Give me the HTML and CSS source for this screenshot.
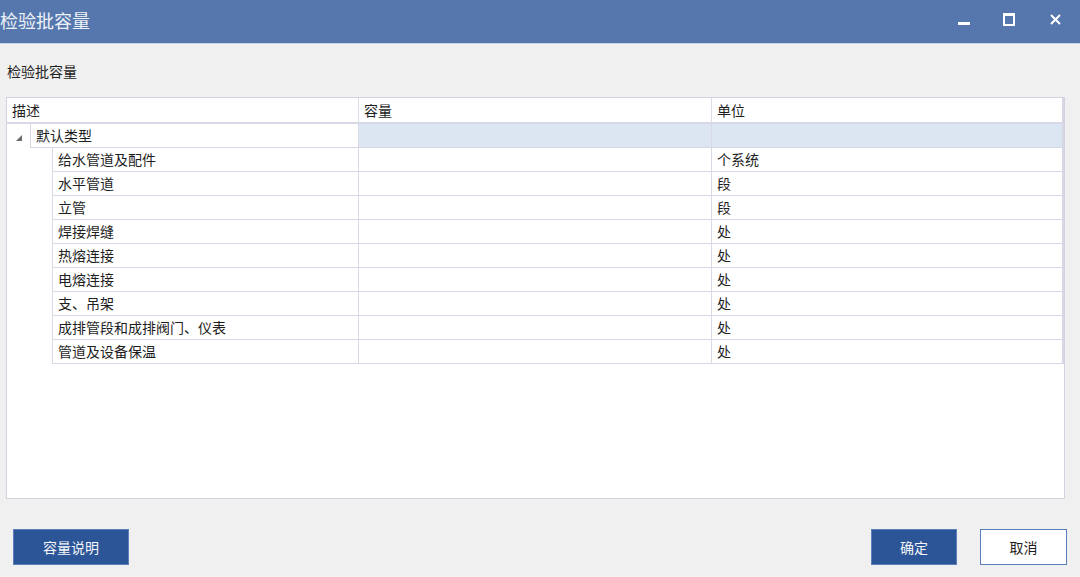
FILE: index.html
```html
<!DOCTYPE html>
<html lang="zh-CN">
<head>
<meta charset="utf-8">
<title>检验批容量</title>
<link rel="stylesheet" href="styles.css">
</head>
<body>
<div class="window">
  <div class="titlebar">
    <div class="title">检验批容量</div>
    <div class="controls">
      <span class="ctl"><svg width="12" height="12" viewBox="0 0 12 12"><rect x="0" y="7" width="12" height="3" fill="#fff"/></svg></span>
      <span class="ctl"><svg width="12" height="13" viewBox="0 0 12 13"><path d="M1 1.5H11V12H1Z" fill="none" stroke="#fff" stroke-width="2"/><rect x="0" y="0" width="12" height="3" fill="#fff"/></svg></span>
      <span class="ctl"><svg width="11" height="11" viewBox="0 0 11 11"><path d="M1 1L10 10M10 1L1 10" stroke="#fff" stroke-width="2"/></svg></span>
    </div>
  </div>
  <div class="content">
    <div class="label">检验批容量</div>
    <div class="grid">
      <div class="row head">
        <div class="cell c1">描述</div>
        <div class="cell c2">容量</div>
        <div class="cell c3">单位</div>
      </div>
      <div class="row group">
        <div class="indent exp"><svg width="7" height="7" viewBox="0 0 7 7"><polygon points="6,0 6,6 0,6" fill="#6b6b6b"/></svg></div>
        <div class="cell c1">默认类型</div>
        <div class="cell c2 sel"></div>
        <div class="cell c3 sel"></div>
      </div>
      <div class="row child"><div class="indent wide"></div><div class="cell c1">给水管道及配件</div><div class="cell c2"></div><div class="cell c3">个系统</div></div>
      <div class="row child"><div class="indent wide"></div><div class="cell c1">水平管道</div><div class="cell c2"></div><div class="cell c3">段</div></div>
      <div class="row child"><div class="indent wide"></div><div class="cell c1">立管</div><div class="cell c2"></div><div class="cell c3">段</div></div>
      <div class="row child"><div class="indent wide"></div><div class="cell c1">焊接焊缝</div><div class="cell c2"></div><div class="cell c3">处</div></div>
      <div class="row child"><div class="indent wide"></div><div class="cell c1">热熔连接</div><div class="cell c2"></div><div class="cell c3">处</div></div>
      <div class="row child"><div class="indent wide"></div><div class="cell c1">电熔连接</div><div class="cell c2"></div><div class="cell c3">处</div></div>
      <div class="row child"><div class="indent wide"></div><div class="cell c1">支、吊架</div><div class="cell c2"></div><div class="cell c3">处</div></div>
      <div class="row child"><div class="indent wide"></div><div class="cell c1">成排管段和成排阀门、仪表</div><div class="cell c2"></div><div class="cell c3">处</div></div>
      <div class="row child"><div class="indent wide"></div><div class="cell c1">管道及设备保温</div><div class="cell c2"></div><div class="cell c3">处</div></div>
    </div>
    <div class="footer">
      <button class="btn primary wide-btn">容量说明</button>
      <div class="right">
        <button class="btn primary ok">确定</button>
        <button class="btn secondary cancel">取消</button>
      </div>
    </div>
  </div>
</div>
</body>
</html>
```

FILE: styles.css
```css
html, body {
  margin: 0;
  padding: 0;
  background: #f0f0f0;
  font-family: "Noto Sans CJK SC", "Microsoft YaHei", sans-serif;
  font-size: 14px;
  color: #1e1e1e;
}
.window {
  width: 1080px;
  height: 577px;
  overflow: hidden;
  display: flex;
  flex-direction: column;
}
.titlebar {
  height: 43px;
  background: #5577ad;
  border-bottom: 1px solid #c9d3e4;
  display: flex;
  align-items: center;
  justify-content: space-between;
  flex-shrink: 0;
}
.title {
  color: #eef2f8;
  font-size: 18px;
  line-height: 24px;
  padding-left: 0;
  margin-top: -4px;
}
.controls {
  display: flex;
  align-items: center;
  padding-right: 2px;
  gap: 0;
}
.ctl {
  display: flex;
  align-items: center;
  justify-content: center;
  width: 46px;
  height: 30px;
}
.ctl:nth-child(1) { width: 45px; margin-top: -2px; }
.ctl:nth-child(2) { width: 46px; margin-top: -5px; }
.ctl:nth-child(3) { width: 46px; margin-top: -5px; }
.content {
  flex: 1;
  display: flex;
  flex-direction: column;
  padding: 0 13px 0 6px;
}
.label {
  height: 53px;
  line-height: 20px;
  padding-top: 17px;
  box-sizing: border-box;
  padding-left: 1px;
  color: #222;
}
.grid {
  width: 1057px;
  height: 400px;
  border: 1px solid #d3d3df;
  background: #fff;
  box-sizing: content-box;
}
.row {
  display: flex;
  height: 24px;
}
.row.head {
  height: 26px;
}
.cell {
  box-sizing: border-box;
  border-right: 1px solid #dadae6;
  border-bottom: 1px solid #d6d6e4;
  line-height: 22px;
  padding-left: 5px;
  white-space: nowrap;
  overflow: hidden;
}
.head .cell {
  line-height: 25px;
  padding-left: 5px;
  border-bottom: 2px solid #d8d8e6;
  border-right: 1px solid #dcdce6;
}
.c1 { flex: 1; }
.c2 { width: 353px; flex-shrink: 0; }
.c3 { width: 352px; flex-shrink: 0; border-right: 2px solid #d8d8e4; }
.head .c3 { border-right: 2px solid #d8d8e4; }
.sel { background: #dce6f2; }
.indent {
  flex-shrink: 0;
  box-sizing: border-box;
  border-right: 1px solid #dadae6;
}
.indent.exp {
  width: 24px;
  display: flex;
  align-items: center;
  padding-left: 9px;
  padding-top: 4px;
  box-sizing: border-box;
}
.indent.wide { width: 46px; }
.group .c1 { padding-left: 5px; }
.child .c1 { padding-left: 5px; }
.footer {
  display: flex;
  justify-content: space-between;
  align-items: flex-start;
  padding-top: 30px;
  padding-left: 7px;
}
.right {
  display: flex;
  gap: 23px;
}
.btn {
  height: 36px;
  font-family: "Noto Sans CJK SC", "Microsoft YaHei", sans-serif;
  font-size: 14px;
  padding: 0;
  box-sizing: border-box;
  cursor: pointer;
}
.primary {
  background: #2c5597;
  color: #f4f6fa;
  border: 1px solid #5b7fbd;
}
.secondary {
  background: #fff;
  color: #1e1e1e;
  border: 1px solid #5a7ebc;
}
.wide-btn { width: 116px; }
.ok { width: 86px; }
.cancel { width: 87px; }
```
